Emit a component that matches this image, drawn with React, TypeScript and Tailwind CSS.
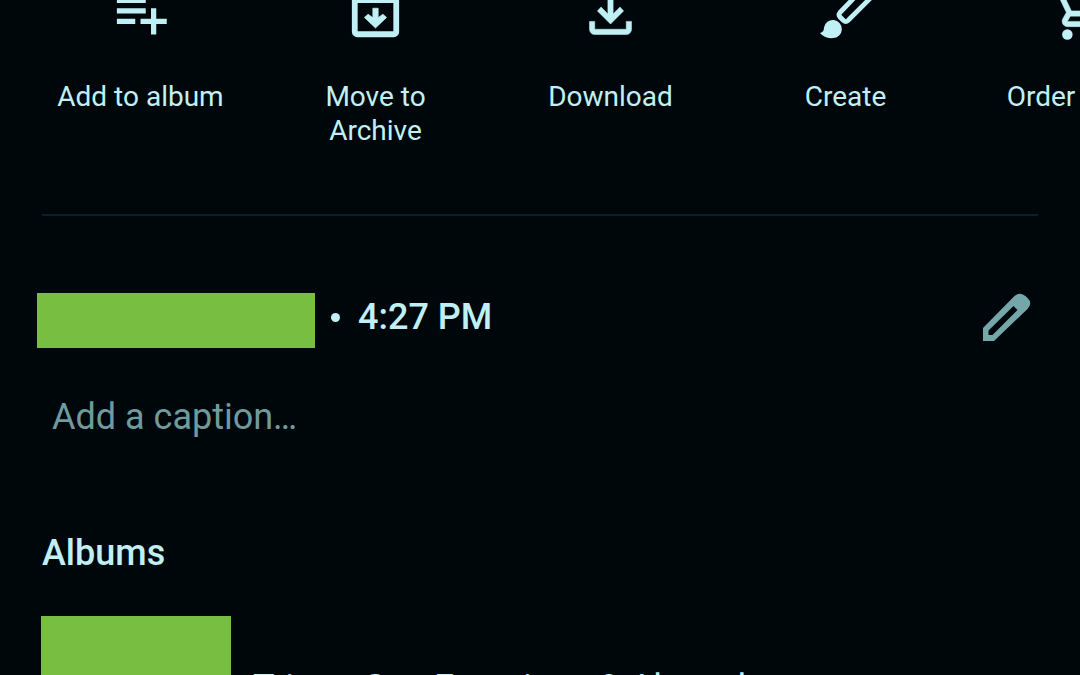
import type { ReactNode } from 'react';

function Icon({ children, box = '0 0 24 24' }: { children: ReactNode; box?: string }) {
  return (
    <svg viewBox={box} className="size-[63px] shrink-0" fill="currentColor" aria-hidden="true">
      {children}
    </svg>
  );
}

const actions = [
  {
    label: 'Add to album',
    icon: (
      <Icon>
        <path d="M14 10H3v2h11v-2zm0-4H3v2h11V6zm4 8v-4h-2v4h-4v2h4v4h2v-4h4v-2h-4zM3 16h7v-2H3v2z" />
      </Icon>
    ),
  },
  {
    label: 'Move to Archive',
    icon: (
      <Icon>
        <path
          fillRule="evenodd"
          d="M5 3h14l2 3v13q0 .8-.6 1.4T19 21H5q-.8 0-1.400-.6T3 19V6zM5.200 8v10.800h13.600V8z"
        />
        <path d="M11 10h2v3.600l1.800-1.300L16.200 13.500l-4.200 4-4.200-4 1.400-1.200 1.800 1.300z" stroke="currentColor" strokeWidth="0.3" />
      </Icon>
    ),
  },
  {
    label: 'Download',
    icon: (
      <Icon>
        <path d="M12 16l-5-5 1.400-1.450 2.600 2.600V4h2v8.150l2.600-2.600L17 11l-5 5zM6 20q-.825 0-1.412-.587Q4 18.825 4 18v-3h2v3h12v-3h2v3q0 .825-.587 1.413Q18.825 20 18 20z" stroke="currentColor" strokeWidth="0.2" />
      </Icon>
    ),
  },
  {
    label: 'Create',
    icon: (
      <Icon box="0 0 63 63">
        <path d="M6 51q4-.8 4-5.500a9 9 0 1 1 9 10.500q-8 1-13-5z" />
        <path
          d="M50 5.500 L26 30.500q-2 2.200 0 4.500l3.500 3.500q2.200 2 4.500 0L59 13.500q2-2 0-4l-5-4q-2-2-4 0z"
          fill="none"
          stroke="currentColor"
          strokeWidth="4.800"
        />
      </Icon>
    ),
  },
  {
    label: 'Order photo',
    icon: (
      <Icon>
        <path d="M15.550 13c.75 0 1.410-.41 1.750-1.030l3.580-6.490A.996.996 0 0 0 20.010 4H5.210l-.94-2H1v2h2l3.600 7.590-1.350 2.440C4.520 15.370 5.480 17 7 17h12v-2H7l1.100-2h7.450zM6.160 6h12.150l-2.760 5H8.530L6.160 6z" stroke="currentColor" strokeWidth="0.2" />
        <circle cx="7" cy="20" r="2" />
        <circle cx="17" cy="20" r="2" />
      </Icon>
    ),
  },
];

export default function App() {
  return (
    <main className="h-screen overflow-hidden bg-[#00070b] font-['Roboto','Noto_Sans',sans-serif] text-[#c0f0f5]">
      <nav aria-label="Photo actions" className="-mt-[18px] flex h-[232px] overflow-hidden pl-[23px]">
        {actions.map(({ label, icon }) => (
          <button
            key={label}
            type="button"
            className="flex w-[235px] shrink-0 flex-col items-center gap-[35px]"
          >
            {icon}
            <span className={label === 'Move to Archive' ? 'w-32 text-[28px] leading-[34px]' : 'whitespace-nowrap text-[28px] leading-[34px]'}>
              {label}
            </span>
          </button>
        ))}
      </nav>

      <hr className="mx-[42px] border-t-2 border-[#06212a]" />

      <section className="pt-[77px]">
        <div className="flex items-start justify-between pr-[49px] pl-[37px]">
          <div className="flex items-start">
            <div className="h-[55px] w-[278px] bg-[#78be41]" />
            <div className="flex h-12 items-center pl-4">
              <span className="size-[9px] rounded-full bg-current" />
              <time className="pl-[18px] text-[36px] font-medium">4:27 PM</time>
            </div>
          </div>
          <button type="button" aria-label="Edit date and time" className="text-[#75a6aa]">
            <svg viewBox="0 0 48 48" className="size-12" fill="currentColor" aria-hidden="true">
              <path
                fillRule="evenodd"
                d="M0 35 31 3.500Q37-2 43 3.500L44.500 5Q50 10 44.500 16L11 48H0zM5.500 37.500v4.500h4L34.500 17l-4-4z"
              />
            </svg>
          </button>
        </div>
        <input
          type="text"
          aria-label="Caption"
          placeholder="Add a caption…"
          className="mt-[45px] block h-12 w-full bg-transparent px-[52px] text-[36px] outline-none placeholder:text-[#6f9a9e]"
        />
      </section>

      <section className="px-[42px] pt-[88px]">
        <h2 className="text-[36px] leading-[48px] font-medium">Albums</h2>
        <a href="#album" className="mt-[39px] -ml-px flex items-start gap-[22px]">
          <span className="h-[190px] w-[190px] shrink-0 bg-[#78be41]" />
          <span className="pt-12 text-[36px] leading-[48px]">Trip to San Francisco &amp; Abroad</span>
        </a>
      </section>
    </main>
  );
}
